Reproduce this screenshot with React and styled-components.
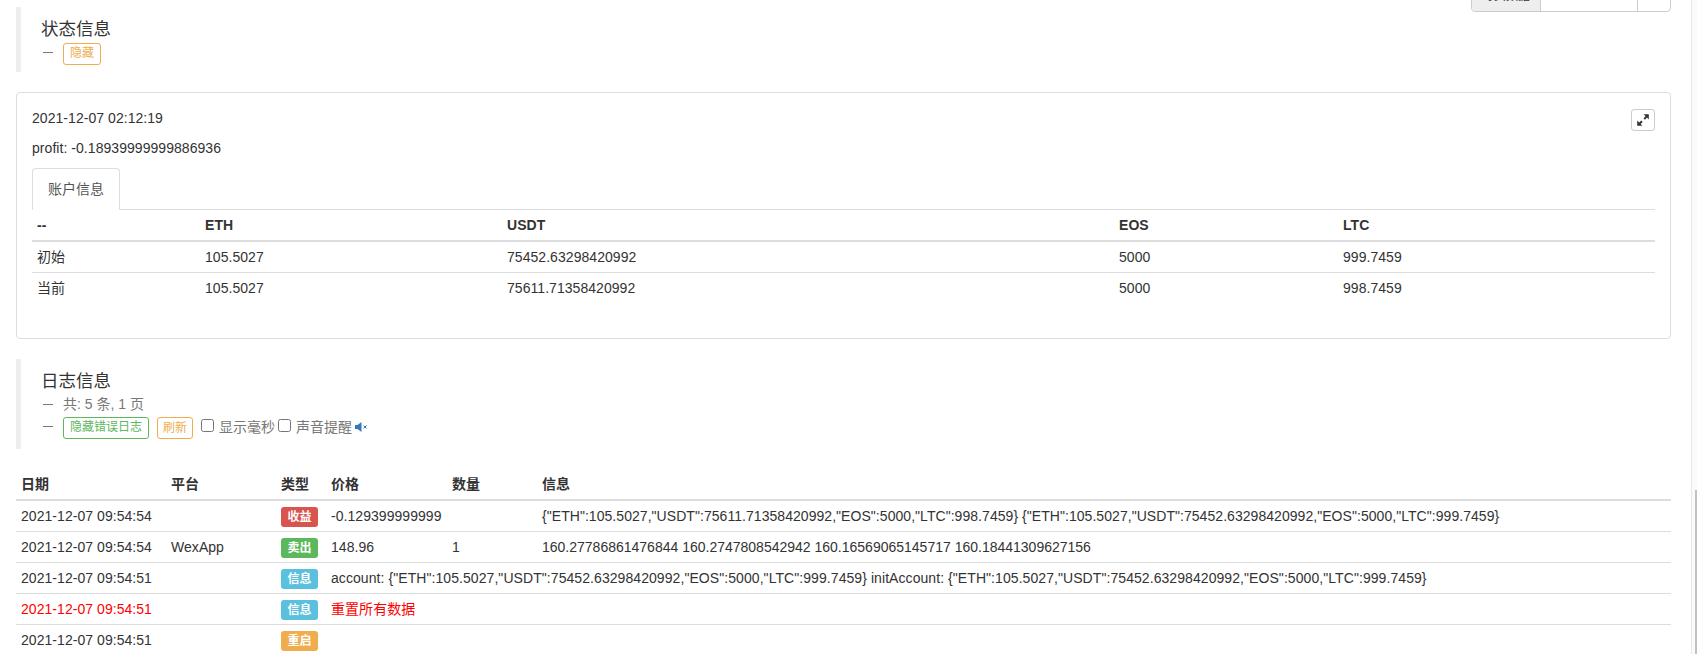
import React from "react";
import styled, { createGlobalStyle } from "styled-components";

const GlobalStyle = createGlobalStyle`
  html, body {
    margin: 0;
    height: 100%;
    overflow: hidden;
    background: #fff;
  }

  body {
    font-family: "Liberation Sans", "Noto Sans CJK SC", sans-serif;
    font-size: 14px;
    line-height: 20px;
    color: #333;
  }

  * {
    box-sizing: border-box;
  }
`;

const Shell = styled.div`
  display: flex;
  height: 654px;
  overflow: hidden;
`;

const Page = styled.div`
  flex: 1;
  min-width: 0;
  padding: 0 20px 0 16px;
`;

const ScrollTrack = styled.div`
  width: 6px;
  display: flex;
  justify-content: flex-end;
  align-items: flex-end;
  background: #fafafa;
  border-left: 1px solid #e8e8e8;
`;

const ScrollThumb = styled.div`
  width: 2px;
  height: 164px;
  background: #c1c1c1;
`;

const PageSizeGroup = styled.div`
  float: right;
  margin-top: -22px;
  display: flex;
  width: 200px;
  height: 34px;
  border: 1px solid #ccc;
  border-radius: 4px;
  overflow: hidden;
  line-height: 34px;
`;

const GroupAddon = styled.div`
  width: 69px;
  background: #eee;
  border-right: 1px solid #ccc;
  text-align: center;
  font-size: 12px;
`;

const GroupInput = styled.div`
  flex: 1;
  padding-left: 26px;
  font-size: 12px;
  color: #555;
`;

const GroupButton = styled.div`
  width: 33px;
  border-left: 1px solid #ccc;
  text-align: center;
`;

const Quote = styled.div`
  margin-top: ${(props) => props.$top}px;
  padding: 10px 20px;
  border-left: 5px solid #eee;
`;

const QuoteTitle = styled.div`
  font-size: 17.5px;
  line-height: 25px;
`;

const QuoteLine = styled.div`
  display: flex;
  align-items: flex-start;
  height: ${(props) => props.$height}px;
  padding-top: ${(props) => props.$pad}px;
  font-size: 14px;
  line-height: 20px;
  color: #777;

  &::before {
    content: "";
    flex: none;
    width: 10px;
    height: 1px;
    margin: ${(props) => props.$dash}px 10px 0 2px;
    background: #777;
  }
`;

const ActionButton = styled.span`
  flex: none;
  height: 22px;
  margin-right: 8px;
  padding: ${(props) => (props.$raised ? "0 6px 2px" : "1px 5px")};
  border: 1px solid ${(props) => props.$color};
  border-radius: 3px;
  background: #fff;
  color: ${(props) => props.$color};
  font-size: 12px;
  line-height: 18px;
`;

const CheckOption = styled.label`
  display: flex;
  align-items: flex-start;
  margin-right: 3px;
  white-space: nowrap;

  input {
    width: 13px;
    height: 13px;
    margin: 2px 5px 0 0;
  }
`;

const Panel = styled.div`
  margin-top: 20px;
  padding: 15px;
  border: 1px solid #ddd;
  border-radius: 4px;
`;

const PanelHead = styled.div`
  display: flex;
  justify-content: space-between;
  height: 20px;
  margin-bottom: 10px;
  letter-spacing: 0.05px;
`;

const ExpandButton = styled.button`
  width: 24px;
  height: 22px;
  margin-top: 1px;
  padding: 0;
  display: flex;
  align-items: center;
  justify-content: center;
  border: 1px solid #ccc;
  border-radius: 3px;
  background: #fff;
`;

const ProfitLine = styled.div`
  margin-bottom: 10px;
  letter-spacing: 0.05px;
`;

const Tabs = styled.div`
  height: 42px;
  border-bottom: 1px solid #ddd;
`;

const Tab = styled.div`
  width: 88px;
  height: 42px;
  padding: 10px 15px;
  border: 1px solid #ddd;
  border-bottom-color: #fff;
  border-radius: 4px 4px 0 0;
  color: #555;
  background: #fff;
`;

const Table = styled.table`
  width: 100%;
  table-layout: fixed;
  border-collapse: collapse;
  border-spacing: 0;
  margin: ${(props) => props.$margin};
  letter-spacing: 0.05px;

  th {
    padding: 5px;
    text-align: left;
    font-weight: 700;
    border-bottom: 2px solid #ddd;
  }

  td {
    padding: 5px;
    white-space: nowrap;
    border-top: 1px solid #ddd;
  }

  tbody tr:first-child td {
    border-top: 0;
  }
`;

const Col = styled.col`
  width: ${(props) => props.$width};
`;

const Cell = styled.td`
  color: ${(props) => (props.$alert ? "#f00" : "#333")};
  letter-spacing: ${(props) => props.$spacing ?? 0.05}px;
`;

const TypeBadge = styled.span`
  display: block;
  width: 37px;
  height: 20px;
  margin-top: 1px;
  margin-bottom: -1px;
  border-radius: 3px;
  background: ${(props) => props.$color};
  color: #fff;
  font-size: 12px;
  font-weight: 700;
  line-height: 20px;
  text-align: center;
`;

const ExpandIcon = () => (
  <svg width="14" height="14" viewBox="0 0 14 14" fill="#333">
    <path d="M7.6 1.2h5.2v5.2l-1.8-1.8-2.1 2.1-1.4-1.4 2.1-2.1z" />
    <path d="M1.2 7.6v5.2h5.2l-1.8-1.8 2.1-2.1-1.4-1.4-2.1 2.1z" />
  </svg>
);

const MuteIcon = () => (
  <svg width="13" height="10" viewBox="0 0 13 10" style={{ marginTop: 5 }}>
    <path d="M0 3h2.5L6.5 0v10L2.5 7H0z" fill="#337ab7" />
    <path d="M8.5 3.5l3 3m0-3l-3 3" stroke="#337ab7" strokeWidth="1" fill="none" />
  </svg>
);

const accountRows = [
  ["初始", "105.5027", "75452.63298420992", "5000", "999.7459"],
  ["当前", "105.5027", "75611.71358420992", "5000", "998.7459"],
];

const logRows = [
  {
    date: "2021-12-07 09:54:54",
    platform: "",
    type: "收益",
    color: "#d9534f",
    price: "-0.129399999999",
    amount: "",
    info: '{"ETH":105.5027,"USDT":75611.71358420992,"EOS":5000,"LTC":998.7459} {"ETH":105.5027,"USDT":75452.63298420992,"EOS":5000,"LTC":999.7459}',
  },
  {
    date: "2021-12-07 09:54:54",
    platform: "WexApp",
    type: "卖出",
    color: "#5cb85c",
    price: "148.96",
    amount: "1",
    info: "160.27786861476844 160.2747808542942 160.16569065145717 160.18441309627156",
    spacing: 0,
  },
  {
    date: "2021-12-07 09:54:51",
    platform: "",
    type: "信息",
    color: "#5bc0de",
    price: 'account: {"ETH":105.5027,"USDT":75452.63298420992,"EOS":5000,"LTC":999.7459} initAccount: {"ETH":105.5027,"USDT":75452.63298420992,"EOS":5000,"LTC":999.7459}',
    wide: true,
    spacing: 0.07,
  },
  {
    date: "2021-12-07 09:54:51",
    platform: "",
    type: "信息",
    color: "#5bc0de",
    price: "重置所有数据",
    wide: true,
    alert: true,
  },
  {
    date: "2021-12-07 09:54:51",
    platform: "",
    type: "重启",
    color: "#f0ad4e",
    price: "",
    wide: true,
  },
];

const App = () => {
  return (
    <Shell>
      <GlobalStyle />
      <Page>
        <PageSizeGroup>
          <GroupAddon>每页数据</GroupAddon>
          <GroupInput>10000</GroupInput>
          <GroupButton>+</GroupButton>
        </PageSizeGroup>

        <Quote $top={7}>
          <QuoteTitle>状态信息</QuoteTitle>
          <QuoteLine $height={20} $pad={1} $dash={9}>
            <ActionButton $color="#f0ad4e" $raised>
              隐藏
            </ActionButton>
          </QuoteLine>
        </Quote>

        <Panel>
          <PanelHead>
            <span>2021-12-07 02:12:19</span>
            <ExpandButton aria-label="expand">
              <ExpandIcon />
            </ExpandButton>
          </PanelHead>
          <ProfitLine>profit: -0.18939999999886936</ProfitLine>
          <Tabs>
            <Tab>账户信息</Tab>
          </Tabs>
          <Table $margin="0 0 20px">
            <colgroup>
              <Col $width="168px" />
              <Col $width="302px" />
              <Col $width="612px" />
              <Col $width="224px" />
              <Col />
            </colgroup>
            <thead>
              <tr>
                <th>--</th>
                <th>ETH</th>
                <th>USDT</th>
                <th>EOS</th>
                <th>LTC</th>
              </tr>
            </thead>
            <tbody>
              {accountRows.map((row) => (
                <tr key={row[0]}>
                  {row.map((value, i) => (
                    <td key={i}>{value}</td>
                  ))}
                </tr>
              ))}
            </tbody>
          </Table>
        </Panel>

        <Quote $top={20}>
          <QuoteTitle>日志信息</QuoteTitle>
          <QuoteLine $height={20} $pad={0} $dash={10}>
            共: 5 条, 1 页
          </QuoteLine>
          <QuoteLine $height={25} $pad={3} $dash={9}>
            <ActionButton $color="#5cb85c" $raised>
              隐藏错误日志
            </ActionButton>
            <ActionButton $color="#f0ad4e">刷新</ActionButton>
            <CheckOption>
              <input type="checkbox" />
              显示毫秒
            </CheckOption>
            <CheckOption>
              <input type="checkbox" />
              声音提醒
            </CheckOption>
            <MuteIcon />
          </QuoteLine>
        </Quote>

        <Table $margin="20px 0 0">
          <colgroup>
            <Col $width="150px" />
            <Col $width="110px" />
            <Col $width="50px" />
            <Col $width="121px" />
            <Col $width="90px" />
            <Col />
          </colgroup>
          <thead>
            <tr>
              <th>日期</th>
              <th>平台</th>
              <th>类型</th>
              <th>价格</th>
              <th>数量</th>
              <th>信息</th>
            </tr>
          </thead>
          <tbody>
            {logRows.map((row, i) => (
              <tr key={i}>
                <Cell $alert={row.alert}>{row.date}</Cell>
                <td>{row.platform}</td>
                <td>
                  <TypeBadge $color={row.color}>{row.type}</TypeBadge>
                </td>
                {row.wide ? (
                  <Cell colSpan={3} $alert={row.alert} $spacing={row.spacing}>
                    {row.price}
                  </Cell>
                ) : (
                  <>
                    <td>{row.price}</td>
                    <td>{row.amount}</td>
                    <Cell $spacing={row.spacing}>{row.info}</Cell>
                  </>
                )}
              </tr>
            ))}
          </tbody>
        </Table>
      </Page>
      <ScrollTrack>
        <ScrollThumb />
      </ScrollTrack>
    </Shell>
  );
};

export default App;
